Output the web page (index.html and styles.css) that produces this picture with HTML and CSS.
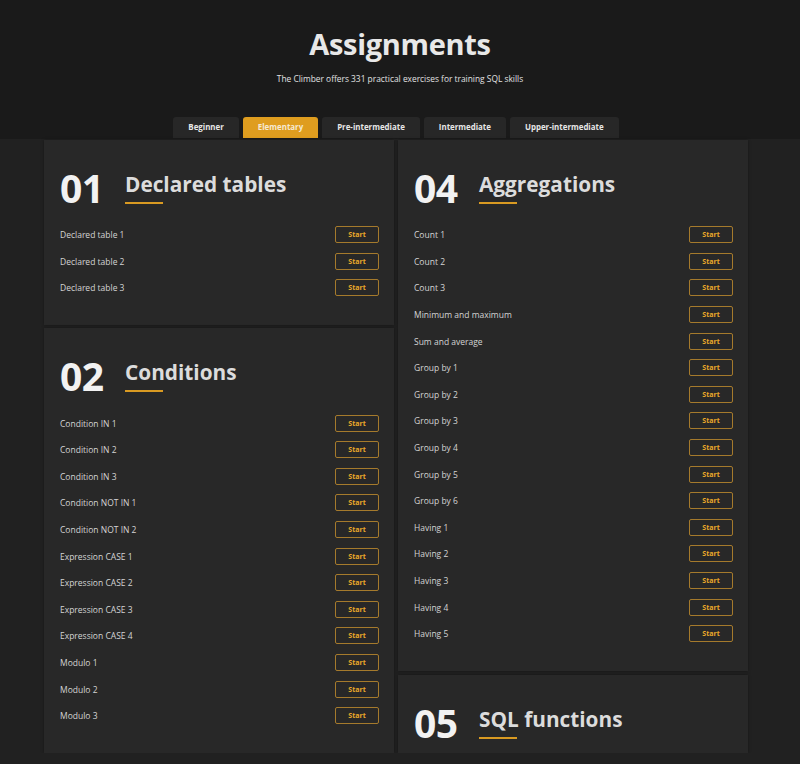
FILE: index.html
```html
<!DOCTYPE html>
<html lang="en">
<head>
    <meta charset="UTF-8">
    <meta name="viewport" content="width=device-width, initial-scale=1.0">
    <title>Assignments</title>
    <link rel="stylesheet" href="styles.css">
</head>
<body>
    <header class="page-header">
        <h1>Assignments</h1>
        <p class="subtitle">The Climber offers 331 practical exercises for training SQL skills</p>
        <nav class="tabs">
            <div class="tab">Beginner</div>
            <div class="tab active">Elementary</div>
            <div class="tab">Pre-intermediate</div>
            <div class="tab">Intermediate</div>
            <div class="tab">Upper-intermediate</div>
        </nav>
    </header>

    <main class="topics">
        <div class="column">
            <section class="topic">
                <div class="topic-head">
                    <span class="topic-num">01</span>
                    <div class="topic-title">
                        <h2>Declared tables</h2>
                        <span class="bar"></span>
                    </div>
                </div>
                <ul class="tasks">
                    <li><span>Declared table 1</span><button>Start</button></li>
                    <li><span>Declared table 2</span><button>Start</button></li>
                    <li><span>Declared table 3</span><button>Start</button></li>
                </ul>
            </section>

            <section class="topic">
                <div class="topic-head">
                    <span class="topic-num">02</span>
                    <div class="topic-title">
                        <h2>Conditions</h2>
                        <span class="bar"></span>
                    </div>
                </div>
                <ul class="tasks">
                    <li><span>Condition IN 1</span><button>Start</button></li>
                    <li><span>Condition IN 2</span><button>Start</button></li>
                    <li><span>Condition IN 3</span><button>Start</button></li>
                    <li><span>Condition NOT IN 1</span><button>Start</button></li>
                    <li><span>Condition NOT IN 2</span><button>Start</button></li>
                    <li><span>Expression CASE 1</span><button>Start</button></li>
                    <li><span>Expression CASE 2</span><button>Start</button></li>
                    <li><span>Expression CASE 3</span><button>Start</button></li>
                    <li><span>Expression CASE 4</span><button>Start</button></li>
                    <li><span>Modulo 1</span><button>Start</button></li>
                    <li><span>Modulo 2</span><button>Start</button></li>
                    <li><span>Modulo 3</span><button>Start</button></li>
                </ul>
            </section>
        </div>

        <div class="column">
            <section class="topic">
                <div class="topic-head">
                    <span class="topic-num">04</span>
                    <div class="topic-title">
                        <h2>Aggregations</h2>
                        <span class="bar"></span>
                    </div>
                </div>
                <ul class="tasks">
                    <li><span>Count 1</span><button>Start</button></li>
                    <li><span>Count 2</span><button>Start</button></li>
                    <li><span>Count 3</span><button>Start</button></li>
                    <li><span>Minimum and maximum</span><button>Start</button></li>
                    <li><span>Sum and average</span><button>Start</button></li>
                    <li><span>Group by 1</span><button>Start</button></li>
                    <li><span>Group by 2</span><button>Start</button></li>
                    <li><span>Group by 3</span><button>Start</button></li>
                    <li><span>Group by 4</span><button>Start</button></li>
                    <li><span>Group by 5</span><button>Start</button></li>
                    <li><span>Group by 6</span><button>Start</button></li>
                    <li><span>Having 1</span><button>Start</button></li>
                    <li><span>Having 2</span><button>Start</button></li>
                    <li><span>Having 3</span><button>Start</button></li>
                    <li><span>Having 4</span><button>Start</button></li>
                    <li><span>Having 5</span><button>Start</button></li>
                </ul>
            </section>

            <section class="topic topic-short">
                <div class="topic-head">
                    <span class="topic-num">05</span>
                    <div class="topic-title">
                        <h2>SQL functions</h2>
                        <span class="bar"></span>
                    </div>
                </div>
            </section>
        </div>
    </main>
</body>
</html>
```

FILE: styles.css
```css
* {
    box-sizing: border-box;
}
body {
    font-family: "Open Sans", "Noto Sans", sans-serif;
    margin: 0;
    color: #ddd;
    background-color: #212121;
    overflow: hidden;
}
.page-header {
    background-color: #1a1a1a;
    text-align: center;
    padding-top: 24px;
    height: 139px;
}
h1 {
    margin: 0;
    font-size: 29px;
    line-height: 40px;
    font-weight: 700;
    color: #e8e8e8;
    letter-spacing: -0.3px;
}
.subtitle {
    margin: 8px 0 0;
    font-size: 8.4px;
    line-height: 14px;
    color: #e2e2e2;
}
.tabs {
    display: flex;
    justify-content: center;
    gap: 4px;
    margin-top: 31px;
    padding-right: 8px;
}
.tab {
    height: 21px;
    line-height: 21px;
    padding: 0 15px;
    font-size: 7.9px;
    font-weight: 700;
    color: #e6e6e6;
    background-color: #272727;
    border-radius: 3px 3px 0 0;
}
.tab.active {
    background-color: #df9d1f;
    color: #f6e9d2;
}

/* two columns of topic cards */
.topics {
    display: flex;
    gap: 4px;
    padding: 1px 0 0 44px;
}
.column {
    width: 350px;
    display: flex;
    flex-direction: column;
    gap: 3px;
}
.topic {
    background-color: #282828;
    box-shadow: 0 0 3px rgba(0,0,0,0.35);
    padding: 28px 15px 24px 16px;
}
.topic-short {
    margin-top: 1px;
    padding-bottom: 10px;
}
.topic-head {
    display: flex;
    align-items: flex-start;
}
.topic-num {
    width: 65px;
    font-size: 39px;
    line-height: 40px;
    font-weight: 700;
    color: #f2f2f2;
    letter-spacing: -0.5px;
}
.topic-title {
    padding-top: 5px;
}
h2 {
    margin: 0;
    font-size: 20.8px;
    line-height: 22px;
    font-weight: 700;
    color: #dcdcdc;
}
.bar {
    display: block;
    width: 38px;
    height: 2px;
    margin-top: 7px;
    background-color: #d99a22;
}
.tasks {
    list-style: none;
    margin: 13.5px 0 0;
    padding: 0;
}
.tasks li {
    display: flex;
    justify-content: space-between;
    align-items: center;
    height: 26.6px;
    font-size: 8.5px;
    color: #d4d4d4;
}
.tasks button {
    width: 44px;
    height: 17px;
    padding: 0;
    font-family: inherit;
    font-size: 7px;
    font-weight: 700;
    color: #eaa82a;
    background-color: transparent;
    border: 1px solid #a57a2c;
    border-radius: 2px;
}
```
